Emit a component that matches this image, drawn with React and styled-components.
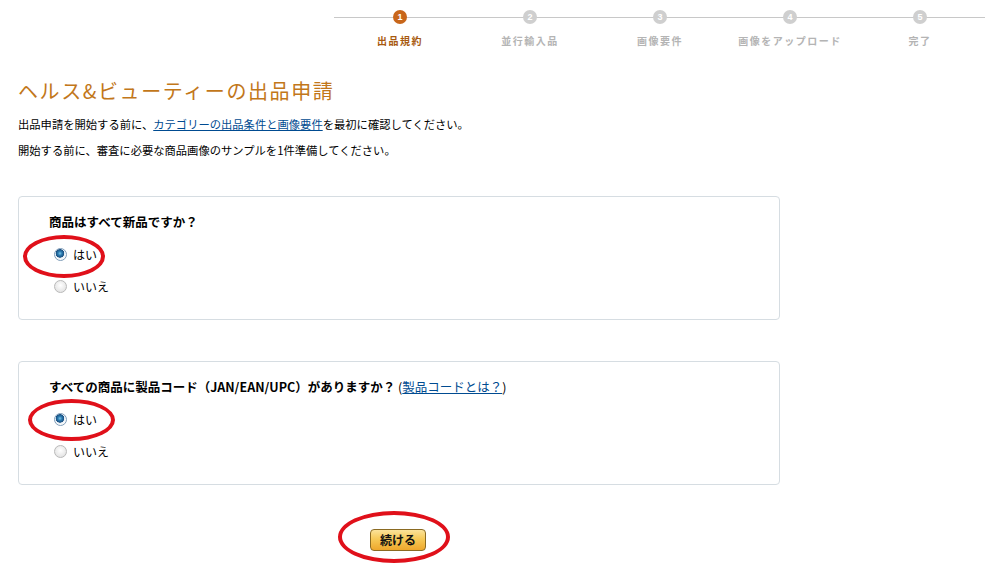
import React, {useState} from 'react';
import styled, {createGlobalStyle} from 'styled-components';

const GlobalStyle = createGlobalStyle`
  body {
    margin: 0;
    background: #fff;
    font-family: "Noto Sans CJK JP", "Liberation Sans", sans-serif;
    color: #000;
  }
`;

const Page = styled.div`
  width: 995px;
  height: 566px;
  overflow: hidden;
  padding-left: 18px;
  box-sizing: border-box;
`;

const Stepper = styled.div`
  position: relative;
  display: flex;
  margin-left: 316px;
  width: 651px;
  height: 60px;
  padding-top: 10px;
  box-sizing: border-box;
  &::before {
    content: '';
    position: absolute;
    left: 0;
    right: 0;
    top: 17px;
    height: 1px;
    background: #c8c8c8;
  }
`;

const Step = styled.div`
  position: relative;
  width: 130px;
  display: flex;
  flex-direction: column;
  align-items: center;
  &:first-child { margin-left: 1px; }
`;

const StepDot = styled.div`
  width: 14px;
  height: 14px;
  border-radius: 50%;
  background: ${p => (p.$active ? '#c8661a' : '#cfcfcf')};
  color: #fff;
  font: bold 9px/14px "Liberation Sans", sans-serif;
  text-align: center;
`;

const StepLabel = styled.div`
  margin-top: 10px;
  font-size: 10px;
  line-height: 14px;
  font-weight: bold;
  letter-spacing: 1.5px;
  color: ${p => (p.$active ? '#a85a10' : '#b4b4b4')};
`;

const Title = styled.h1`
  margin: 17px 0 0;
  font-size: 20px;
  line-height: 28px;
  font-weight: normal;
  letter-spacing: 1.6px;
  color: #c2771a;
`;

const Intro = styled.p`
  margin: 0;
  font-size: 11.3px;
  line-height: 26px;
  &:first-of-type { margin-top: 6px; }
`;

const Link = styled.a`
  color: #004b91;
  text-decoration: underline;
  cursor: pointer;
`;

const Box = styled.div`
  width: 762px;
  box-sizing: border-box;
  border: 1px solid #d6dde2;
  border-radius: 4px;
  padding: 17px 30px;
  margin-top: ${p => p.$gap}px;
`;

const Question = styled.div`
  font-size: 12.5px;
  line-height: 16px;
  height: 16px;
  font-weight: bold;
  margin-bottom: 8px;
  & span { font-weight: normal; }
`;

const OptionRow = styled.label`
  position: relative;
  display: flex;
  align-items: center;
  gap: 6px;
  height: 32px;
  padding-left: 5px;
  font-size: 12px;
  cursor: pointer;
`;

const Radio = styled.span`
  width: 11px;
  height: 11px;
  border-radius: 50%;
  border: 1px solid ${p => (p.$checked ? '#7f9db9' : '#b9b9b9')};
  background: ${p =>
    p.$checked
      ? 'radial-gradient(circle at 45% 40%, #7fc3e8 0, #2a7bb0 2px, #1b4f80 4px, #e6eef5 4.5px, #fafafa 6px)'
      : 'radial-gradient(circle at 50% 40%, #ffffff 0, #e6e6e6 6px)'};
`;

const Circle = styled.span`
  position: absolute;
  left: ${p => p.$left}px;
  top: ${p => p.$top}px;
  width: ${p => p.$w}px;
  height: ${p => p.$h}px;
  border: 4px solid #e0101a;
  border-radius: 50%;
  box-sizing: border-box;
  pointer-events: none;
`;

const ButtonWrap = styled.div`
  position: relative;
  margin: 44px 0 0 352px;
  width: 56px;
`;

const Button = styled.button`
  display: block;
  width: 56px;
  height: 22px;
  padding: 0;
  border: 1px solid #8a6a22;
  border-radius: 4px;
  background: linear-gradient(#fbe39a 0%, #f6c957 45%, #eea72c 100%);
  font-family: "Noto Sans CJK JP", sans-serif;
  font-size: 12px;
  font-weight: bold;
  line-height: 20px;
  color: #111;
  cursor: pointer;
`;

const steps = ['出品規約', '並行輸入品', '画像要件', '画像をアップロード', '完了'];

const Choice = ({checked, label, onClick, circle}) => (
  <OptionRow onClick={onClick}>
    <Radio $checked={checked} />
    {label}
    {circle && <Circle {...circle} />}
  </OptionRow>
);

const App = () => {
  const [isNew, setIsNew] = useState('yes');
  const [hasCode, setHasCode] = useState('yes');

  return (
    <Page>
      <GlobalStyle />
      <Stepper>
        {steps.map((s, i) => (
          <Step key={s}>
            <StepDot $active={i === 0}>{i + 1}</StepDot>
            <StepLabel $active={i === 0}>{s}</StepLabel>
          </Step>
        ))}
      </Stepper>

      <Title>ヘルス&amp;ビューティーの出品申請</Title>
      <Intro>
        出品申請を開始する前に、<Link>カテゴリーの出品条件と画像要件</Link>を最初に確認してください。
      </Intro>
      <Intro>開始する前に、審査に必要な商品画像のサンプルを1件準備してください。</Intro>

      <Box $gap={33}>
        <Question>商品はすべて新品ですか？</Question>
        <Choice
          checked={isNew === 'yes'}
          label="はい"
          onClick={() => setIsNew('yes')}
          circle={{$left: -26, $top: -3, $w: 82, $h: 43}}
        />
        <Choice checked={isNew === 'no'} label="いいえ" onClick={() => setIsNew('no')} />
      </Box>

      <Box $gap={41}>
        <Question>
          すべての商品に製品コード（JAN/EAN/UPC）がありますか？ <span>(<Link>製品コードとは？</Link>)</span>
        </Question>
        <Choice
          checked={hasCode === 'yes'}
          label="はい"
          onClick={() => setHasCode('yes')}
          circle={{$left: -21, $top: -4, $w: 87, $h: 42}}
        />
        <Choice checked={hasCode === 'no'} label="いいえ" onClick={() => setHasCode('no')} />
      </Box>

      <ButtonWrap>
        <Button>続ける</Button>
        <Circle $left={-32} $top={-18} $w={112} $h={52} />
      </ButtonWrap>
    </Page>
  );
};

export default App;
